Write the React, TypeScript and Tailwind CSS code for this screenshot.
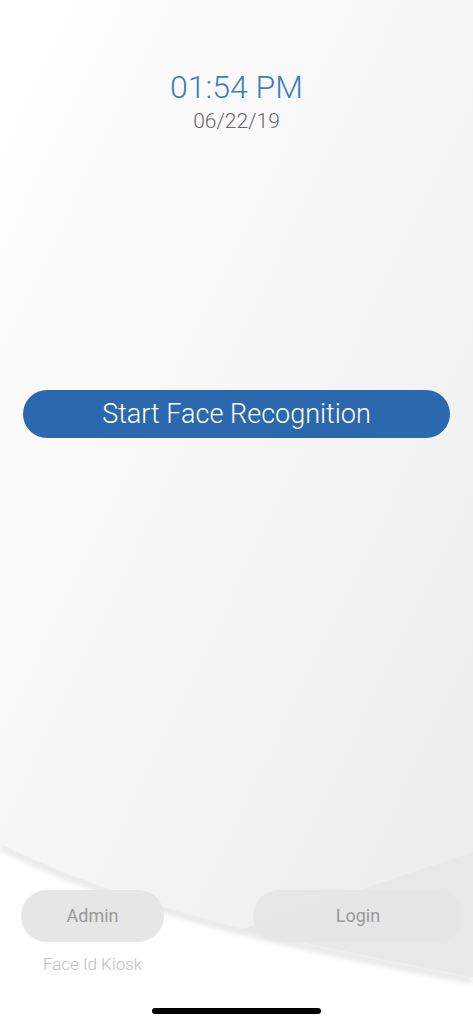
import React from 'react';

const Backdrop: React.FC = () => (
  <svg className="absolute inset-0 h-full w-full" viewBox="0 0 473 1024" preserveAspectRatio="none">
    <defs>
      <linearGradient id="sheet" x1="0" y1="0" x2="1" y2="1">
        <stop offset="0" stopColor="#ffffff" />
        <stop offset="0.45" stopColor="#f7f7f7" />
        <stop offset="1" stopColor="#ebebeb" />
      </linearGradient>
      <filter id="soft" x="-10%" y="-10%" width="120%" height="130%">
        <feGaussianBlur stdDeviation="3" />
      </filter>
    </defs>
    <path d="M0 846 C 120 908, 300 948, 473 980" fill="none" stroke="#dcdcdc" strokeWidth="5" filter="url(#soft)" />
    <path d="M0 0 H473 V977 C 300 946, 120 905, 0 843 Z" fill="url(#sheet)" />
    <path d="M473 852 C 400 876, 320 904, 240 930 L 473 977 Z" fill="#e8e8e8" />
  </svg>
);

const App: React.FC = () => {
  return (
    <div
      className="relative h-[1024px] w-full overflow-hidden bg-white"
      style={{ fontFamily: '"Helvetica Neue", Roboto, "Liberation Sans", sans-serif' }}
    >
      <Backdrop />

      <div className="relative flex h-full flex-col">
        <div className="flex flex-col items-center pt-[67px]">
          <div className="text-[32px] font-light leading-[40px] text-[#3d7cc4]">01:54 PM</div>
          <div className="text-[21px] font-light leading-[28px] text-[#666666]">06/22/19</div>
        </div>

        <button className="mx-[23px] mt-[255px] h-[48px] rounded-full bg-[#2c68ae] text-[27px] font-light text-white">
          Start Face Recognition
        </button>

        <div className="mt-auto flex items-start justify-between pl-[21px] pr-[10px]">
          <div className="flex flex-col items-center">
            <button className="h-[52px] w-[143px] rounded-full bg-[#e6e6e6] text-[18px] text-[#9a9a9a]">Admin</button>
            <span className="mt-[10px] text-[17px] font-light text-[#bdbdbd]">Face Id Kiosk</span>
          </div>
          <button className="h-[52px] w-[210px] rounded-full bg-[#e5e5e5]/90 text-[18px] text-[#9a9a9a]">Login</button>
        </div>

        <div className="flex justify-center pb-[10px] pt-[31px]">
          <div className="h-[6px] w-[169px] rounded-full bg-black" />
        </div>
      </div>
    </div>
  );
};

export default App;
